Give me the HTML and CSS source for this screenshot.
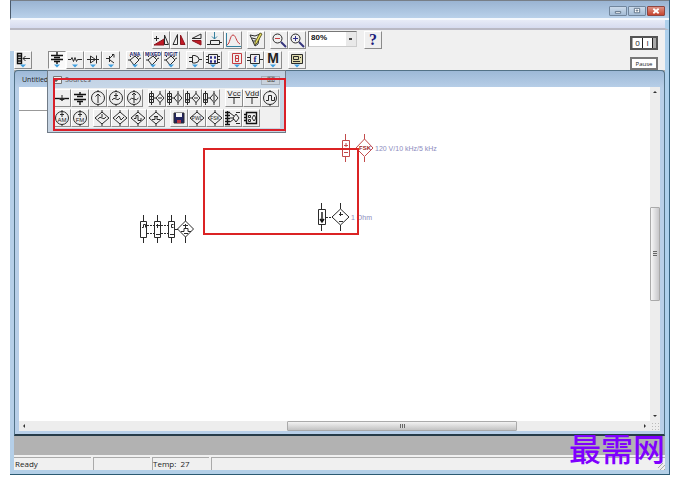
FILE: index.html
```html
<!DOCTYPE html>
<html lang="en">
<head>
<meta charset="utf-8">
<title>Circuit workbench</title>
<link rel="stylesheet" href="styles.css">
</head>
<body>
<svg class="sprite" aria-hidden="true">
  <defs>
    <symbol id="drop" viewBox="0 0 18 18"><path class="drop" d="M6 13.500h6l-3 3z"/></symbol>
    <symbol id="diamond" viewBox="0 0 18 18"><path d="M9 3l7 6-7 6-7-6zM9 1v3M9 14v3"/></symbol>
    <symbol id="ring" viewBox="0 0 18 18"><circle cx="9" cy="9" r="6.500"/><path d="M9 1v2M9 15v2"/></symbol>
    <symbol id="pair" viewBox="0 0 18 18"><path d="M3.500 2v14M1.500 4.500h4v9h-4zM12 4.500l4 4.500-4 4.500L8 9zM12 2v3M12 13v3M5 9h3"/></symbol>
    <symbol id="chip" viewBox="0 0 18 18"><path d="M4 8l5-4 4 4-5 5zM5 5L4 4M4 8H2M13 7l2-1M8 12l1 1M11 5l2-1"/></symbol>
  </defs>
</svg>

<main class="window">
  <header class="titlebar">
    <div class="controls">
      <button aria-label="Minimize"><svg viewBox="0 0 18 9"><path class="ctl" d="M6 5h6v2H6z"/></svg></button>
      <button aria-label="Restore"><svg viewBox="0 0 18 9"><path class="ctl" d="M6 1.500h6v5H6zM8 3.500h2v1H8z"/></svg></button>
      <button class="close" aria-label="Close"><svg viewBox="0 0 18 9"><path class="cross" d="M6 2l6 5M12 2L6 7"/></svg></button>
    </div>
  </header>
  <nav class="menubar"></nav>

  <section class="toolbars">
    <div class="rows">
      <div class="row first">
        <div class="group">
          <button aria-label="Rotate"><svg viewBox="0 0 18 18"><path class="red" d="M2 14l10-6v6z"/><path d="M12.500 13.500V4l4 9.500zM2 7.500h5M4.500 5v5"/></svg></button>
          <button aria-label="Flip horizontal"><svg viewBox="0 0 18 18"><path d="M3 13.500l4.500-10v10z"/><path class="red" d="M10.500 4v9.500H15z"/></svg></button>
          <button aria-label="Flip vertical"><svg viewBox="0 0 18 18"><path d="M4 7.500l9-4.500v4.500z"/><path class="red" d="M4 9.500h9V14z"/></svg></button>
          <button aria-label="Create subcircuit"><svg viewBox="0 0 18 18"><path class="blue" d="M8.500 1v7M6 5.500l2.500 2.500L11 5.500"/><path d="M4.500 9.500h9v4h-9zM1 13.500h3M13 11.500h3"/></svg></button>
          <button aria-label="Display graphs"><svg viewBox="0 0 18 18"><path class="blue" d="M2.500 2v13.500H17"/><path class="redline" d="M3 14c3-1 3-10 6-10s3 7 7 9"/></svg></button>
        </div>
        <div class="group">
          <button aria-label="Properties"><svg viewBox="0 0 18 18"><path d="M3 4l5 1 5-2-2 10-3 2zM5 7l4 1M6 10h3"/><path class="pencil" d="M8 11l5-9 2 1-5 9-2 2z"/></svg></button>
        </div>
        <div class="group">
          <button aria-label="Zoom out"><svg viewBox="0 0 18 18"><circle cx="7.500" cy="7.500" r="4.500"/><path class="redline" d="M5 7.500h5"/><path class="handle" d="M11 11l5 5"/></svg></button>
          <button aria-label="Zoom in"><svg viewBox="0 0 18 18"><circle cx="7.500" cy="7.500" r="4.500"/><path class="navyline" d="M5 7.500h5M7.500 5v5"/><path class="handle" d="M11 11l5 5"/></svg></button>
        </div>
        <select class="scale" aria-label="Zoom level"><option>80%</option></select>
        <div class="group">
          <button aria-label="Help" class="help">?</button>
        </div>
      </div>
      <div class="row second">
        <div class="group">
          <button aria-label="Favorites"><svg viewBox="0 0 18 18"><path class="thick" d="M3.500 2.500h4v10h-4zM3 5h4M3 7.500h4M3 10h4"/><path d="M9 7.500h7M11.500 5L9 7.500l2.500 2.500"/><use href="#drop"/></svg></button>
        </div>
        <div class="group wide">
          <button class="pressed" aria-label="Sources"><svg viewBox="0 0 18 18"><path class="thick" d="M3 4.500h12M6 6.500h6M3 8.500h12M6 10.500h6M9 1v3M9 11v2"/><use href="#drop"/></svg></button>
          <button aria-label="Basic"><svg viewBox="0 0 18 18"><path d="M2 8.500h3l1-2 1.500 4L9 6.500l1.500 4 1-2H16"/><use href="#drop"/></svg></button>
          <button aria-label="Diodes"><svg viewBox="0 0 18 18"><path d="M3 8.500h12M6.500 5v7l5-3.500zM12.500 4.500v8"/><use href="#drop"/></svg></button>
          <button aria-label="Transistors"><svg viewBox="0 0 18 18"><path d="M4 7.500h3M7.500 5v6M8 7l4-4M8 9l4 3M10 3.500h2v3"/><use href="#drop"/></svg></button>
        </div>
        <div class="group">
          <button aria-label="Analog ICs"><svg viewBox="0 0 18 18"><use href="#chip" y="1"/><text class="cap" x="9" y="5">ANA</text><use href="#drop"/></svg></button>
          <button aria-label="Mixed ICs"><svg viewBox="0 0 18 18"><use href="#chip" y="1"/><text class="cap" x="9" y="5">MIXED</text><use href="#drop"/></svg></button>
          <button aria-label="Digital ICs"><svg viewBox="0 0 18 18"><use href="#chip" y="1"/><text class="cap" x="9" y="5">DIGIT</text><use href="#drop"/></svg></button>
        </div>
        <div class="group">
          <button aria-label="Logic gates"><svg viewBox="0 0 18 18"><path d="M6.500 4.500H9q4 1 4 4t-4 3.500H6.500zM3 6.500h3M3 10.500h3M13 8.500h3"/><use href="#drop"/></svg></button>
          <button aria-label="Digital"><svg viewBox="0 0 18 18"><path d="M4.500 3.500h9v9h-9zM2 5.500h2M2 8.500h2M2 11.500h2M14 5.500h2M14 8.500h2M14 11.500h2"/><path class="navyline" d="M6.500 5.500h1v2h-1zM10.500 5.500h1v2h-1zM6.500 9.500h1v2h-1zM10.500 9.500h1v2h-1z"/><use href="#drop"/></svg></button>
        </div>
        <div class="group">
          <button aria-label="Indicators"><svg viewBox="0 0 18 18"><path class="redline" d="M4.500 2.500h9v10h-9z"/><path class="redline" d="M7.500 4.500h3v6h-3zM7 7.500h4"/><use href="#drop"/></svg></button>
          <button aria-label="Controls"><svg viewBox="0 0 18 18"><path d="M4.500 3.500h9v9h-9zM1 6.500h3M1 9.500h3M14 8.500h3"/><text class="glyph" x="9" y="11">f</text><use href="#drop"/></svg></button>
          <button aria-label="Miscellaneous"><svg viewBox="0 0 18 18"><text class="big" x="9" y="12">M</text><use href="#drop"/></svg></button>
        </div>
        <div class="group">
          <button aria-label="Instruments"><svg viewBox="0 0 18 18"><path class="meter" d="M3.500 3.500h11v9h-11z"/><path d="M5.500 5.500h5v3h-5zM5 10.500h7M12 6.500h1"/><use href="#drop"/></svg></button>
        </div>
      </div>
    </div>
    <div class="simulate">
      <button class="switch" aria-label="Activate simulation"><span>0</span><span class="on">I</span></button>
      <button class="pause">Pause</button>
    </div>
  </section>

  <section class="workspace">
    <article class="document">
      <h1>Untitled</h1>
      <div class="view">
        <div class="canvas">
          <svg class="part generator" viewBox="0 0 56 30"><path d="M4.500 1v6M18.500 1v6M32.500 1v6M46.500 1v6M4.500 24v5M18.500 24v5M32.500 24v5M46.500 23v6M1.500 7.500h6v16h-6zM15.500 7.500h6v16h-6zM29.500 7.500h6v16h-6zM46.500 7l8 8-8 8-8-8z"/><path class="dash" d="M8 11.500h7M8 19.500h7M22 11.500h7M22 19.500h7"/><path d="M36 15.500h3M3 13.500h1.500v-3h2v3M17 11.500h4M18.500 10v4M17 20.500h4M34.500 10.500h-2v3h2M31 20.500h4M44 11.500h5M46.500 10v4M42 17.500h3v-3h4v3h3M45 19.500h4"/></svg>
          <svg class="part fsk" viewBox="0 0 34 30"><path d="M4.500 1v6M23.500 1v5M4.500 24v5M23.500 24v5M1.500 7.500h7v16h-7zM23.500 6l8.500 9-8.500 8.500L15 15zM3 12.500h4M5 10v4M3 19.500h4M9 15.500h6"/><text x="24" y="17">FSK</text></svg>
          <span class="value fsk-value">120 V/10 kHz/5 kHz</span>
          <svg class="part ohm" viewBox="0 0 34 30"><path d="M4.500 1v6M23.500 1v6M4.500 23v6M23.500 23v6M1.500 7.500h7v15h-7zM23.500 7l8.500 8-8.500 8-8.500-8zM22 12.500h4M23.500 10v4M22 19.500h4"/><path class="thick" d="M5 10v9M3 17l2 3 2-3"/><path class="dash" d="M9 15.500h6"/></svg>
          <span class="value ohm-value">1 Ohm</span>
          <div class="mark"></div>
        </div>
        <div class="vscroll"><svg viewBox="0 0 10 10"><path d="M3 6h4L5 4z"/></svg><div class="vthumb"><i></i></div><svg viewBox="0 0 10 10"><path d="M3 4h4L5 6z"/></svg></div>
        <div class="hscroll"><svg viewBox="0 0 10 10"><path d="M6 3v4L4 5z"/></svg><div class="hthumb"><i></i></div><svg viewBox="0 0 10 10"><path d="M4 3v4l2-2z"/></svg></div>
        <div class="grip"></div>
      </div>
    </article>

    <aside class="palette">
      <header><svg viewBox="0 0 9 8"><path class="sheet" d="M.5.500h8v7h-8z"/><path d="M2 3h2v2H2z"/></svg><h2>Sources</h2><button aria-label="Close palette">⌧</button></header>
      <div class="parts">
        <div class="row">
          <div class="group">
            <button aria-label="Ground"><svg viewBox="0 0 18 18"><path class="thick" d="M2 9.500h14"/><path class="ink" d="M6 9.500h6l-3 2z"/><path d="M9 6v3"/></svg></button>
            <button aria-label="Battery"><svg viewBox="0 0 18 18"><path class="thick" d="M3 5.500h12M6 7.500h6M3 10.500h12M6 12.500h6M9 3v2M9 13v3"/></svg></button>
            <button aria-label="DC current source"><svg viewBox="0 0 18 18"><use href="#ring"/><path d="M9 14V5M6.500 7.500L9 5l2.500 2.500"/></svg></button>
            <button aria-label="AC voltage source"><svg viewBox="0 0 18 18"><use href="#ring"/><path d="M7 6.500h4M9 4v5M5 11q2-3 4-1t4-1"/></svg></button>
            <button aria-label="AC current source"><svg viewBox="0 0 18 18"><use href="#ring"/><path d="M9 14V4M7 6l2-2 2 2M4.500 11q2-3 4.500-1t4.500-1"/></svg></button>
          </div>
          <div class="group">
            <button aria-label="Voltage-controlled voltage source"><svg viewBox="0 0 18 18"><use href="#pair"/><path d="M2 7.500h3M2 10.500h3M10 9h4"/></svg></button>
            <button aria-label="Voltage-controlled current source"><svg viewBox="0 0 18 18"><use href="#pair"/><path d="M2 7.500h3M2 10.500h3M12 6v6"/></svg></button>
            <button aria-label="Current-controlled voltage source"><svg viewBox="0 0 18 18"><use href="#pair"/><path d="M10 9h4M2 10l1.500 2L5 10"/></svg></button>
            <button aria-label="Current-controlled current source"><svg viewBox="0 0 18 18"><use href="#pair"/><path d="M12 6v6M2 10l1.500 2L5 10"/></svg></button>
          </div>
          <div class="group">
            <button aria-label="Vcc source"><svg viewBox="0 0 18 18"><text class="rail" x="9" y="7">Vcc</text><path d="M3 8.500h12M9 9v6"/></svg></button>
            <button aria-label="Vdd source"><svg viewBox="0 0 18 18"><text class="rail" x="9" y="7">Vdd</text><path d="M3 8.500h12M9 9v6"/></svg></button>
            <button aria-label="Clock"><svg viewBox="0 0 18 18"><use href="#ring"/><path d="M5 11.500h2.500v-5h3v5h3V8"/></svg></button>
          </div>
        </div>
        <div class="row">
          <div class="group">
            <button aria-label="AM source"><svg viewBox="0 0 18 18"><use href="#ring"/><text class="code" x="9" y="13">AM</text><path d="M7 5.500h4M9 3v5"/></svg></button>
            <button aria-label="FM source"><svg viewBox="0 0 18 18"><use href="#ring"/><text class="code" x="9" y="13">FM</text><path d="M7 5.500h4M9 3v5"/></svg></button>
          </div>
          <div class="group narrow">
            <button aria-label="Sine VCO"><svg viewBox="0 0 18 18"><use href="#diamond"/><path d="M9 5v3M5 10q2-3 4-1t4-1"/></svg></button>
            <button aria-label="Triangle VCO"><svg viewBox="0 0 18 18"><use href="#diamond"/><path d="M5 10l3-3 2 4 3-3"/></svg></button>
            <button aria-label="Square VCO"><svg viewBox="0 0 18 18"><use href="#diamond"/><path d="M5 9.500h2v-3h2v5h3V9"/></svg></button>
            <button aria-label="One-shot"><svg viewBox="0 0 18 18"><use href="#diamond"/><path d="M5 10.500h3v-3h2v3h3M7 7.500h4"/></svg></button>
          </div>
          <div class="group">
            <button aria-label="Piecewise linear source"><svg viewBox="0 0 18 18"><path class="disk" d="M4 4h10v10H4z"/><path class="label" d="M6 4h6v4H6z"/><path class="slot" d="M7 11h4v3H7z"/></svg></button>
            <button aria-label="Controlled piecewise linear source"><svg viewBox="0 0 18 18"><use href="#diamond"/><text class="mini" x="9" y="11">PWL</text></svg></button>
            <button aria-label="FSK source"><svg viewBox="0 0 18 18"><use href="#diamond"/><text class="mini" x="9" y="11">FSK</text></svg></button>
            <button aria-label="Polynomial source"><svg viewBox="0 0 18 18"><path class="thick" d="M3.500 2v14M1 3.500h5M1 6.500h5M1 9.500h5M1 12.500h5M1 15.500h5"/><path d="M6 9h3M6 4l4 3M6 13l4-3M12 5l3 4-3 4-3-4zM12 3.500h4M12 14.500h4"/></svg></button>
            <button aria-label="Nonlinear dependent source"><svg viewBox="0 0 18 18"><path class="thick" d="M4.500 3.500h10v11h-10zM2 5.500h3M2 8.500h3M2 11.500h3"/><path d="M6.500 6.500h2v2h-2zM6.500 10.500h2v2h-2zM12 6l2 3-2 3-2-3z"/></svg></button>
          </div>
        </div>
      </div>
      <div class="outline"></div>
    </aside>
  </section>

  <footer class="status"><span>Ready</span><span></span><span>Temp:&nbsp; 27</span><span></span></footer>
  <div class="watermark" lang="zh-CN">最需网</div>
</main>
</body>
</html>
```
FILE: styles.css
```css
* { box-sizing: border-box; }

body {
  margin: 0;
  background: #fff;
  color: #222;
  font-family: "Open Sans", "Noto Sans", sans-serif;
  font-size: 8px;
}

h1, h2 { margin: 0; font-weight: 400; }

button {
  padding: 0;
  font: inherit;
  color: inherit;
}

svg {
  display: block;
  fill: none;
  stroke: #2a2a2a;
  stroke-width: 1;
}

svg text { stroke: none; fill: #222; text-anchor: middle; }
.sprite { position: absolute; width: 0; height: 0; }

.window {
  position: relative;
  display: flex;
  flex-direction: column;
  height: calc(100vh - 5px);
  margin: 0 12px 0 10px;
  background: #f0f0f0;
  border-right: 1px solid #35617f;
  border-bottom: 1px solid #2c5a72;
}

.titlebar {
  display: flex;
  justify-content: flex-end;
  height: 20px;
  padding: 5px 4px 0 0;
  border-top: 1px solid #777f88;
  border-left: 1px solid #4b5b6c;
  border-bottom: 2px solid #f4f8fd;
  background: linear-gradient(#9ab4d2, #b9d1ea);
}

.controls { display: flex; gap: 1px; height: 10px; }

.controls button {
  width: 18px;
  height: 10px;
  border: 1px solid #71869d;
  border-radius: 1px;
  background: linear-gradient(#cbdaea, #a5bdd6);
}

.controls svg { width: 16px; height: 8px; }
.controls .close { border-color: #8f4640; background: linear-gradient(#dd9285, #c74530); }
.ctl { fill: #fff; stroke: #566a80; }
.cross { stroke: #fff; stroke-width: 2; }

.menubar {
  height: 10px;
  background: linear-gradient(#e7ebf7, #d6dbef);
  border-right: 4px solid #add0ec;
  border-bottom: 2px solid #b9b9c4;
}

.toolbars {
  display: flex;
  height: 40px;
  justify-content: space-between;
  border-right: 4px solid #add0ec;
}

.row, .group { display: flex; }

.first { height: 21px; padding: 1px 0 0 142px; gap: 5px; }
.second {
  height: 19px;
  gap: 6px;
  border-left: 4px solid #b5cfe8;
}
.second .wide { margin: 0 0 0 10px; }

.group button {
  width: 18px;
  height: 18px;
  border: 1px solid;
  border-color: #fff #8b8b8b #8b8b8b #fff;
  background: #efefef;
}

/* Icons are drawn over the full button face, borders included. */
.group svg { width: 18px; height: 18px; margin: -1px; }
.group .pressed { border-color: #8b8b8b #fff #fff #8b8b8b; background: #fafafa; }

.group .help {
  margin: 0 0 0 2px;
  color: #1b1b7c;
  font: 700 16px/16px "Liberation Serif", serif;
}

.scale {
  width: 49px;
  height: 16px;
  margin: 0 0 0 -3px;
  padding: 0 0 3px 2px;
  border: 1px solid;
  border-color: #777 #ccc #ccc #777;
  border-radius: 0;
  appearance: none;
  color: #111;
  background: linear-gradient(#444, #444) right 4px top 6px / 3px 2px no-repeat,
    linear-gradient(90deg, #fff 37px, #e9e9e9 37px);
  font: 700 8px/10px "Liberation Sans", sans-serif;
}

.red { fill: #c21a26; stroke: #8d1720; }
.redline { stroke: #c53c40; }
.blue { stroke: #34809f; }
.navyline { stroke: #30308a; }
.handle { stroke: #34347d; stroke-width: 2; }
.pencil { fill: #e9e05d; stroke: #65602a; }
.drop { fill: #3f9fe0; stroke: none; }
.thick { stroke: #111; stroke-width: 1.4; }
.ink { fill: #222; }
.meter { fill: #ddd9ad; }
.disk { fill: #20235e; }
.label { fill: #f7f7f7; stroke: none; }
.slot { fill: #bb3543; stroke: none; }
svg .cap { fill: #23236d; font: 700 5px "Liberation Sans", sans-serif; }
svg .glyph { fill: #22227c; font: 700 9px "Liberation Serif", serif; }
svg .big { font: 700 14px "Liberation Sans", sans-serif; }
svg .rail { font: 8px "Liberation Sans", sans-serif; }
svg .code { font: 6px "Liberation Sans", sans-serif; }
svg .mini { font: 5px "Liberation Sans", sans-serif; }

.simulate {
  display: flex;
  flex-direction: column;
  gap: 7px;
  padding: 6px 7px 0 0;
}

.switch {
  display: flex;
  width: 28px;
  height: 14px;
  border: 2px solid #555;
  background: #aaa;
  font-size: 8px;
  line-height: 10px;
}

.simulate .switch { padding: 0 3px 0 1px; }
.switch span { flex: 1; height: 10px; background: #fff; }
.switch .on { border-right: 1px solid #222; border-left: 1px solid #222; }

.simulate .pause {
  width: 28px;
  height: 13px;
  border: 2px solid #777;
  background: #fff;
  font-size: 6px;
  line-height: 8px;
}

.workspace {
  position: relative;
  display: flex;
  flex: 1;
  min-height: 0;
  padding-bottom: 19px;
  border-left: 4px solid #b5cfe8;
  border-right: 4px solid #add0ec;
  background: #b2b2b2;
}

.document {
  display: flex;
  flex: 1;
  flex-direction: column;
  padding: 0 4px 3px;
  border: 1px solid #527287;
  border-bottom: 2px solid #263b48;
  border-radius: 4px 4px 0 0;
  background: linear-gradient(#9db9d7, #b8cfe8 17px);
}

.document h1 { height: 16px; padding: 2px 0 0 3px; font-size: 7px; line-height: 14px; }

.view {
  display: grid;
  flex: 1;
  grid-template: 1fr 10px / 1fr 10px;
  background: #ededed;
}

.canvas {
  position: relative;
  background: linear-gradient(#999, #999) 0 23px / 29px 1px no-repeat #fff;
}

.part { position: absolute; }
.generator { left: 120px; top: 127px; width: 56px; height: 30px; }
.fsk { left: 322px; top: 46px; width: 34px; height: 30px; stroke: #c24b4b; }
.fsk text { fill: #9c2525; font: 700 6px "Liberation Sans", sans-serif; }
.ohm { left: 298px; top: 115px; width: 34px; height: 30px; }
.dash { stroke-dasharray: 2 1; }

.value {
  position: absolute;
  color: #8c8cbe;
  font: 7px/10px "Liberation Sans", sans-serif;
  white-space: nowrap;
}

.fsk-value { left: 356px; top: 57px; }
.ohm-value { left: 332px; top: 126px; }

.mark {
  position: absolute;
  left: 184px;
  top: 61px;
  width: 156px;
  height: 87px;
  border: 2px solid #db2324;
}

.vscroll, .hscroll { display: flex; align-items: center; }
.vscroll { flex-direction: column; }
.vscroll svg, .hscroll svg { flex: none; width: 10px; height: 10px; fill: #333; stroke: none; }

.vthumb, .hthumb {
  display: flex;
  align-items: center;
  justify-content: center;
  border: 1px solid #aaa;
  border-radius: 1px;
}

.vthumb {
  width: 10px;
  height: 28%;
  margin: 110px 0 auto;
  background: linear-gradient(90deg, #f7f7f7, #c7c7ca);
}

.hthumb {
  width: 230px;
  height: 10px;
  margin: 0 auto 0 258px;
  background: linear-gradient(#f2f2f2, #c3c3c3);
}

.vthumb i { width: 4px; height: 5px; background: repeating-linear-gradient(#666 0 1px, #ddd 1px 2px); }
.hthumb i { width: 5px; height: 4px; background: repeating-linear-gradient(90deg, #666 0 1px, #ddd 1px 2px); }
.grip { background: radial-gradient(#bbb 1px, transparent 1px) 1px 1px / 3px 3px; }

.palette {
  position: absolute;
  top: 0;
  left: 33px;
  width: 239px;
  padding: 0 5px 4px;
  border: 1px solid #707b87;
  background: linear-gradient(#bfcfe1, #c8d8e9 18px, #c6d3e1);
}

.palette header { display: flex; align-items: center; height: 17px; gap: 3px; padding-top: 1px; }
.palette header svg { width: 9px; height: 8px; }
.palette h2 { color: #555; font-size: 7px; line-height: 12px; }
.sheet { fill: #eee; stroke: #777; }

.palette header button {
  width: 19px;
  height: 9px;
  margin-left: auto;
  border: 1px solid #a6afba;
  background: #c9d2dc;
  color: #555;
  font-size: 7px;
  line-height: 6px;
}

.parts { display: grid; gap: 2px; padding: 1px 0; background: #f0f0f0; }
.parts .row { gap: 5px; }
.parts .group + .narrow { margin: 0 0 0 -1px; }

.outline {
  position: absolute;
  top: 7px;
  right: -1px;
  left: 5px;
  height: 53px;
  border: 2px solid #d9202a;
  pointer-events: none;
}

.status {
  display: flex;
  height: 19px;
  gap: 2px;
  padding-top: 2px;
  border: solid #b3cfe7;
  border-width: 0 4px 4px;
  font-size: 8px;
  line-height: 11px;
}

.status span { width: 57px; border-top: 1px solid #aaa; border-left: 1px solid #aaa; }
.status span:first-child { width: 77px; padding-left: 1px; border-left: 0; }
.status span:last-child { flex: 1; background: repeating-linear-gradient(135deg, #aaa 0 1px, #eee 1px 3px) right bottom / 7px 7px no-repeat; }

.watermark {
  position: absolute;
  right: 4px;
  bottom: 11px;
  color: #7f00ff;
  font: 500 32px/32px "Noto Sans CJK SC", sans-serif;
}
```
